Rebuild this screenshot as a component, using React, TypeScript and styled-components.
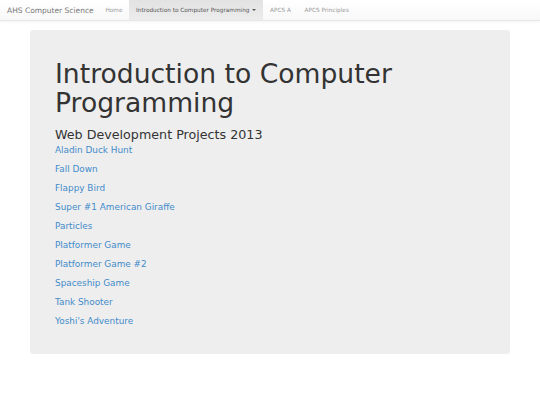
import React from "react";
import styled, { createGlobalStyle } from "styled-components";

const GlobalStyle = createGlobalStyle`
  html, body {
    margin: 0;
    padding: 0;
    background: #ffffff;
    font-family: "DejaVu Sans", Verdana, sans-serif;
  }
`;

const projects = [
  "Aladin Duck Hunt",
  "Fall Down",
  "Flappy Bird",
  "Super #1 American Giraffe",
  "Particles",
  "Platformer Game",
  "Platformer Game #2",
  "Spaceship Game",
  "Tank Shooter",
  "Yoshi's Adventure",
];

const navItems = [
  { label: "Home" },
  { label: "Introduction to Computer Programming", active: true, dropdown: true },
  { label: "APCS A" },
  { label: "APCS Principles" },
];

export default function App() {
  return (
    <>
      <GlobalStyle />
      <Navbar>
        <Brand>AHS Computer Science</Brand>
        <NavList>
          {navItems.map((item) => (
            <NavItem key={item.label} $active={!!item.active}>
              {item.label}
              {item.dropdown && <Caret />}
            </NavItem>
          ))}
        </NavList>
      </Navbar>
      <Container>
        <Jumbotron>
          <Title>Introduction to Computer Programming</Title>
          <Subtitle>Web Development Projects 2013</Subtitle>
          <LinkList>
            {projects.map((p) => (
              <ProjectLink key={p} href="#">
                {p}
              </ProjectLink>
            ))}
          </LinkList>
        </Jumbotron>
      </Container>
    </>
  );
}

const Navbar = styled.nav`
  display: flex;
  align-items: stretch;
  height: 20px;
  background: linear-gradient(to bottom, #ffffff 0%, #f8f8f8 100%);
  border-bottom: 1px solid #e7e7e7;
  box-shadow: 0 1px 3px rgba(0, 0, 0, 0.05);
`;

const Brand = styled.div`
  display: flex;
  align-items: center;
  padding: 0 5px 0 7px;
  font-size: 7.5px;
  color: #777;
`;

const NavList = styled.div`
  display: flex;
  align-items: stretch;
`;

const NavItem = styled.div<{ $active: boolean }>`
  display: flex;
  align-items: center;
  gap: 2px;
  padding: 0 6.8px;
  font-size: 5.75px;
  color: ${(p) => (p.$active ? "#555" : "#999")};
  background: ${(p) =>
    p.$active ? "linear-gradient(to bottom, #e2e2e2 0%, #ececec 100%)" : "transparent"};
`;

const Caret = styled.span`
  display: inline-block;
  width: 0;
  height: 0;
  margin-left: 1px;
  border-top: 2.5px solid #555;
  border-left: 2.5px solid transparent;
  border-right: 2.5px solid transparent;
`;

const Container = styled.div`
  padding: 9px 30px 0 30px;
`;

const Jumbotron = styled.div`
  background: #eeeeee;
  border-radius: 3px;
  padding: 29px 25px 26px 25px;
  height: 324px;
  box-sizing: border-box;
`;

const Title = styled.h1`
  margin: 0;
  font-weight: normal;
  font-size: 26.6px;
  line-height: 29px;
  color: #333;
`;

const Subtitle = styled.h2`
  margin: 9px 0 0 0;
  font-weight: normal;
  font-size: 12.7px;
  line-height: 17px;
  color: #333;
`;

const LinkList = styled.div`
  display: flex;
  flex-direction: column;
  align-items: flex-start;
  margin-top: -2px;
`;

const ProjectLink = styled.a`
  display: block;
  font-size: 8.9px;
  line-height: 19px;
  color: #428bca;
  text-decoration: none;
`;
